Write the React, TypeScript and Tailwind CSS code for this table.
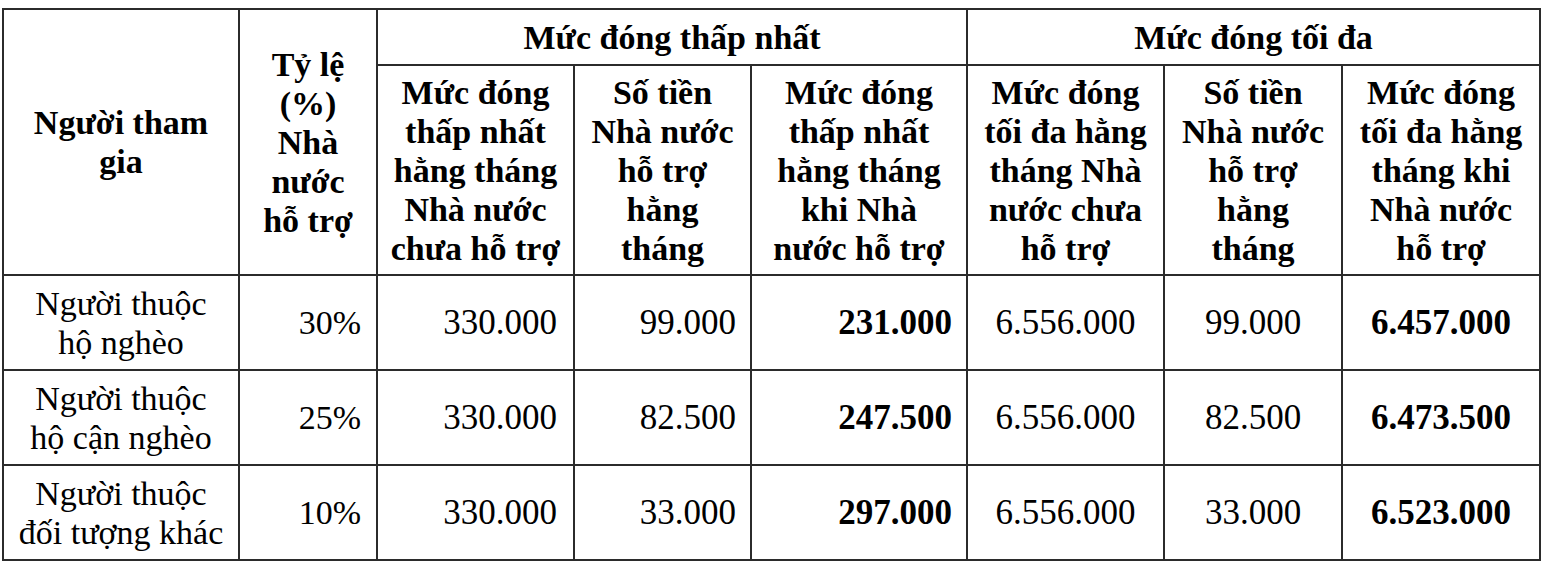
import React from 'react';

const cellBorder = 'border-2 border-[#2b2b2b]';

const ROWS = [
  { who: ['Người thuộc', 'hộ nghèo'], rate: '30%', minBase: '330.000', minAid: '99.000', minPay: '231.000', maxBase: '6.556.000', maxAid: '99.000', maxPay: '6.457.000' },
  { who: ['Người thuộc', 'hộ cận nghèo'], rate: '25%', minBase: '330.000', minAid: '82.500', minPay: '247.500', maxBase: '6.556.000', maxAid: '82.500', maxPay: '6.473.500' },
  { who: ['Người thuộc', 'đối tượng khác'], rate: '10%', minBase: '330.000', minAid: '33.000', minPay: '297.000', maxBase: '6.556.000', maxAid: '33.000', maxPay: '6.523.000' },
];

const Lines = ({ lines }: { lines: string[] }) => (
  <>
    {lines.map((l, i) => (
      <div key={i} className="whitespace-nowrap">{l}</div>
    ))}
  </>
);

export default function App() {
  return (
    <div className="min-h-[575px] w-[1558px] bg-white pl-[2px] pt-[8px] text-black font-[family-name:Liberation_Serif,Times_New_Roman,serif] text-[34px] leading-[39px]">
      <table className="table-fixed border-collapse w-[1537px]">
        <colgroup>
          <col className="w-[236px]" />
          <col className="w-[138px]" />
          <col className="w-[197px]" />
          <col className="w-[177px]" />
          <col className="w-[216px]" />
          <col className="w-[197px]" />
          <col className="w-[178px]" />
          <col className="w-[198px]" />
        </colgroup>
        <thead className="font-bold">
          <tr className="h-[56px]">
            <th rowSpan={2} className={`${cellBorder} text-center align-middle font-bold`}>
              <Lines lines={['Người tham', 'gia']} />
            </th>
            <th rowSpan={2} className={`${cellBorder} text-center align-middle font-bold`}>
              <Lines lines={['Tỷ lệ', '(%)', 'Nhà', 'nước', 'hỗ trợ']} />
            </th>
            <th colSpan={3} className={`${cellBorder} text-center align-middle font-bold`}>Mức đóng thấp nhất</th>
            <th colSpan={3} className={`${cellBorder} text-center align-middle font-bold`}>Mức đóng tối đa</th>
          </tr>
          <tr className="h-[210px]">
            <th className={`${cellBorder} text-center align-middle font-bold`}>
              <Lines lines={['Mức đóng', 'thấp nhất', 'hằng tháng', 'Nhà nước', 'chưa hỗ trợ']} />
            </th>
            <th className={`${cellBorder} text-center align-middle font-bold`}>
              <Lines lines={['Số tiền', 'Nhà nước', 'hỗ trợ', 'hằng', 'tháng']} />
            </th>
            <th className={`${cellBorder} text-center align-middle font-bold`}>
              <Lines lines={['Mức đóng', 'thấp nhất', 'hằng tháng', 'khi Nhà', 'nước hỗ trợ']} />
            </th>
            <th className={`${cellBorder} text-center align-middle font-bold`}>
              <Lines lines={['Mức đóng', 'tối đa hằng', 'tháng Nhà', 'nước chưa', 'hỗ trợ']} />
            </th>
            <th className={`${cellBorder} text-center align-middle font-bold`}>
              <Lines lines={['Số tiền', 'Nhà nước', 'hỗ trợ', 'hằng', 'tháng']} />
            </th>
            <th className={`${cellBorder} text-center align-middle font-bold`}>
              <Lines lines={['Mức đóng', 'tối đa hằng', 'tháng khi', 'Nhà nước', 'hỗ trợ']} />
            </th>
          </tr>
        </thead>
        <tbody>
          {ROWS.map((r) => (
            <tr key={r.rate} className="h-[95px]">
              <td className={`${cellBorder} text-center align-middle`}>
                <Lines lines={r.who} />
              </td>
              <td className={`${cellBorder} text-right align-middle pr-[15px]`}>{r.rate}</td>
              <td className={`${cellBorder} text-right align-middle pr-[16px] text-[35px]`}>{r.minBase}</td>
              <td className={`${cellBorder} text-right align-middle pr-[14px] text-[35px]`}>{r.minAid}</td>
              <td className={`${cellBorder} text-right align-middle pr-[14px] text-[35px] font-bold`}>{r.minPay}</td>
              <td className={`${cellBorder} text-center align-middle text-[35px]`}>{r.maxBase}</td>
              <td className={`${cellBorder} text-center align-middle text-[35px]`}>{r.maxAid}</td>
              <td className={`${cellBorder} text-center align-middle text-[35px] font-bold`}>{r.maxPay}</td>
            </tr>
          ))}
        </tbody>
      </table>
    </div>
  );
}
